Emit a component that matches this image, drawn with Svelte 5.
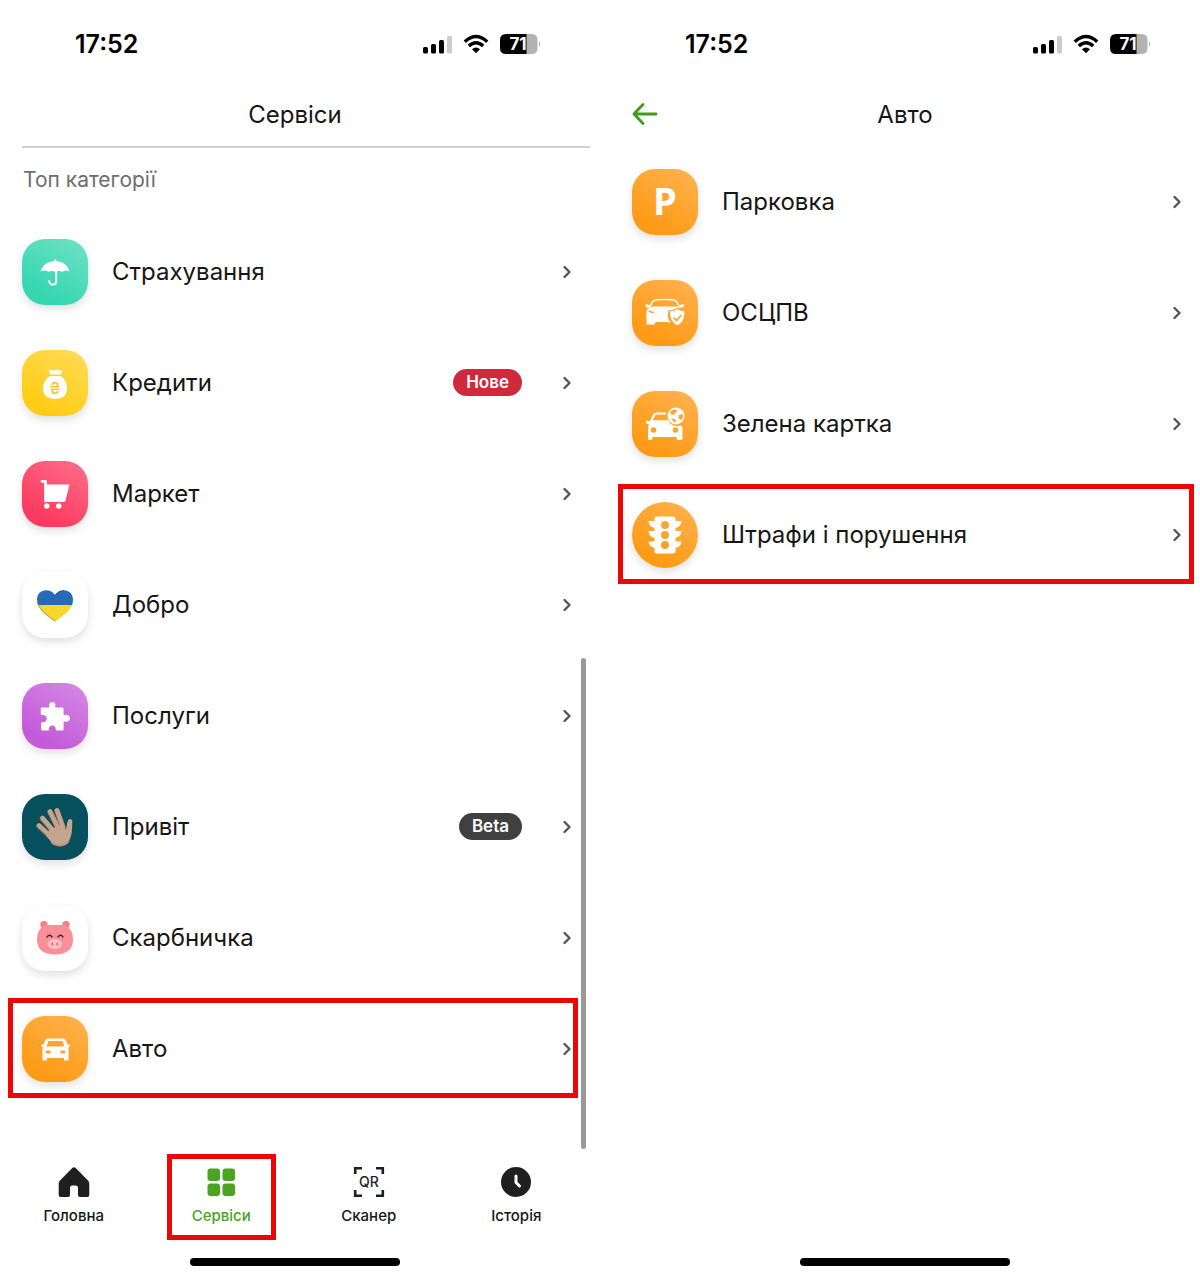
<script>
  const services = [
    { id: "insurance", name: "Страхування", color: "mint" },
    { id: "credit", name: "Кредити", color: "yellow", badge: "Нове", badgeType: "new" },
    { id: "market", name: "Маркет", color: "pink" },
    { id: "charity", name: "Добро", color: "white" },
    { id: "puzzle", name: "Послуги", color: "purple" },
    { id: "hello", name: "Привіт", color: "teal", badge: "Beta", badgeType: "beta" },
    { id: "piggy", name: "Скарбничка", color: "white" },
    { id: "auto", name: "Авто", color: "orange", marked: true },
  ];

  const autoServices = [
    { id: "parking", name: "Парковка", color: "orange" },
    { id: "policy", name: "ОСЦПВ", color: "orange" },
    { id: "greencard", name: "Зелена картка", color: "orange" },
    { id: "fines", name: "Штрафи і порушення", color: "orange", round: true, marked: true },
  ];

  const tabs = [
    { id: "home", name: "Головна" },
    { id: "services", name: "Сервіси", active: true },
    { id: "scanner", name: "Сканер" },
    { id: "history", name: "Історія" },
  ];
</script>

{#snippet statusBar()}
  <div class="status">
    <span class="time">17:52</span>
    <svg class="indicators" width="120" height="24" viewBox="0 0 120 24" aria-hidden="true">
      <rect x="1" y="15" width="5" height="6.500" rx="1.500" />
      <rect x="9" y="12" width="5" height="9.500" rx="1.500" />
      <rect x="17" y="8" width="5" height="13.500" rx="1.500" />
      <rect x="25" y="4" width="5" height="17.500" rx="1.500" fill="#ccc" />
      <g fill="none" stroke="#000" stroke-width="3.400">
        <path d="M42.800 9.700Q54 -.7 65.200 9.700" />
        <path d="M46.800 14Q54 7.500 61.200 14" />
      </g>
      <path d="M54 21.300l-4-4.100q4-3.200 8 0z" />
      <path d="M84 2h21v20H84q-6 0-6-6V8q0-6 6-6z" />
      <path d="M104.500 2h5q6 0 6 6v8q0 6-6 6h-5z" fill="#b3b3b3" />
      <path d="M117 9q2.500 3 0 6z" fill="#b3b3b3" />
      <text x="96" y="18" text-anchor="middle" font-size="17" font-weight="700" fill="#fff">71</text>
    </svg>
  </div>
{/snippet}

{#snippet picture(id)}
  <svg width="66" height="66" viewBox="0 0 66 66" fill="#fff" aria-hidden="true">
    {#if id === "insurance"}
      <path d="M18.500 32.500C20 26 26 22.500 32.300 22.300V20.500q1-1.500 2 0v1.800C40.500 22.500 46 26 47.500 32.500Q43.500 30.500 40.500 32.800Q37 31 33.500 32.800Q29.500 31 26.500 32.800Q22.500 30.500 18.500 32.500z" />
      <path d="M34.200 31V42.500Q34.200 45.600 30.800 45.600T27.200 42" fill="none" stroke="#fff" stroke-width="1.900" stroke-linecap="round" />
    {:else if id === "credit"}
      <path d="M27 20q1.500-1 3 0t3.200 0t3.200 0t3 0q1 .5.500 1.500l-1 3H28.500l-1.500-3z" />
      <path d="M28 26H38.500C43 29 45 33.500 45 38.500C45 45.500 40 49 33 49S21 45.500 21 38.500C21 33.500 23.500 29 28 26z" />
      <text x="33" y="43.500" text-anchor="middle" font-size="16" font-weight="500" fill="#f6c81f">₴</text>
    {:else if id === "market"}
      <path d="M20 20.300H23.500V40" fill="none" stroke="#fff" stroke-width="2.800" stroke-linecap="round" stroke-linejoin="round" />
      <path d="M23 23.500H47.500L43.500 39.500Q43.200 41 42 41H23z" />
      <circle cx="24.800" cy="45" r="2.700" />
      <circle cx="36.800" cy="45" r="2.700" />
    {:else if id === "charity"}
      <clipPath id="heart">
        <path d="M33 49.500C25 44 15 37.500 15 28C15 22 19 18.300 24 18.300C28 18.300 31 20 33 23C35 20 38 18.300 42 18.300C47 18.300 51 22 51 28C51 37.500 41 44 33 49.500z" />
      </clipPath>
      <g clip-path="url(#heart)">
        <rect x="14" y="17" width="38" height="16.500" fill="#286ab7" />
        <rect x="14" y="33" width="38" height="18" fill="#f4d82e" />
        <path d="M15 28C15 37.500 25 44 33 49.500" fill="none" stroke="#a18a36" stroke-width="2" opacity=".6" />
        <path d="M33 23C35 20 38 18.300 42 18.300" fill="none" stroke="#1d5192" stroke-width="2" opacity=".6" />
      </g>
    {:else if id === "puzzle"}
      <path d="M19.500 24.500H27q.7 0 .4-1.200C26.500 21 28 19 30.300 19S34 21 33.200 23.300q-.4 1.200.4 1.200h6.500q1.500 0 1.500 1.500v5.500q0 1 1.200.5C45.500 31 48 32.700 48 35.300S45.500 39.500 42.800 38.600q-1.200-.4-1.200.6V46q0 1.500-1.500 1.500h-5.600q-.8 0-.8-1C33.700 44 32.500 42.500 30.300 42.500S27 44 27 46.500q0 1-.8 1h-5.700Q19 47.500 19 46v-6q0-1 1-.8C23 39.500 24.800 38 24.800 35.500S23 31.700 20 32q-1.200.1-1.200-.8V25z" />
    {:else if id === "hello"}
      <g fill="none" stroke="#8a705f" stroke-width="5.600" stroke-linecap="round">
        <path d="M17 32l12 11M20.500 24.500l11 13M28 18l8 16M35 16.800l6 17" />
      </g>
      <path d="M27 36L41 30L44 36C44.500 33 45 29 46 26.500C47 24 50.500 24.500 50.300 27.500C50 34 50.500 41 47 47C43 53 34.500 53 29.500 48.500L24 41.500z" fill="#c5a58f" />
      <g fill="none" stroke="#c5a58f" stroke-width="4.300" stroke-linecap="round">
        <path d="M17 31.500l12 11M20.500 24l11 13M28 17.500l8 16M35 16.200l6 17" />
      </g>
      <path d="M29 48.500C34.500 53 43 53 47 47" fill="none" stroke="#b09079" stroke-width="1.500" />
    {:else if id === "piggy"}
      <g fill="#f47f87">
        <circle cx="22" cy="19.700" r="3.700" />
        <circle cx="44" cy="19.700" r="3.700" />
      </g>
      <path d="M23 20H43Q51 24 51 34.500C51 44 45 49.500 33 49.500S15 44 15 34.500Q15 24 23 20z" fill="#fb8e96" />
      <path d="M25 32q2.500-3.400 5 0M36 32q2.500-3.400 5 0" fill="none" stroke="#45272c" stroke-width="1.400" stroke-linecap="round" />
      <ellipse cx="32.800" cy="39" rx="7.300" ry="5" fill="#ffc0c3" />
      <ellipse cx="30.300" cy="39" rx="1.100" ry="1.700" fill="#f06b77" />
      <ellipse cx="35.300" cy="39" rx="1.100" ry="1.700" fill="#f06b77" />
    {:else if id === "auto"}
      <path fill-rule="evenodd" d="M26 22.500H41Q43 22.500 43.800 24.500L45.500 28.500H47.500V30.500L46 31.500Q46.500 32.500 46.500 34V44.500H42V42H25V44.500H20.500V34Q20.500 32.500 21 31.500L19.500 30.500V28.500H21.500L23.200 24.500Q24 22.500 26 22.500zM26.500 25L24.500 30.500H42.500L40.500 25zM25 34.500q-1.500.2-1.500 1.500t1.500 1.500h3.500v-3zM42 34.500h-3.500v3H42q1.500-.2 1.500-1.500t-1.500-1.500z" />
    {:else if id === "parking"}
      <text x="33" y="46" text-anchor="middle" font-family="Open Sans, sans-serif" font-size="38" font-weight="700">P</text>
    {:else if id === "policy"}
      <path d="M18 27L20 22.500Q21.500 20 25 19.800Q32 19 40 19.800Q43.500 20 45.200 22.500L47.500 27" fill="none" stroke="#fff" stroke-width="1.500" />
      <path d="M13.500 24.500q3-1 4.500 1.500v1.500h-4zM52 24.500q-3-1-4.500 1.500v1.500h4z" />
      <path d="M18 27.500L21.500 26.500H44.500L48 28L45 28.500Q41 30.500 36.500 30.500C35 36 36.500 40.500 39 43L35 42H23.500L22.500 44.500H14.500V31Q15 28.500 18 27.500z" />
      <path d="M16 30.500q1.500 3 6.500 2.800q-1-2.300-6.500-2.800z" fill="#ffa636" />
      <path d="M45.500 28.500q3.500 2.300 7.500 2.500C53.500 38.500 51 43.500 45.500 46C40 43.500 37 38.500 37.500 31q4.500-.2 8-2.500z" stroke="#ffa42c" stroke-width="1.200" />
      <path d="M41.500 37.500l3 3l5-5.500" fill="none" stroke="#ffa428" stroke-width="1.700" />
    {:else if id === "greencard"}
      <path d="M19 30.500L21.500 25Q22.500 22.500 26 22.500H34" fill="none" stroke="#fff" stroke-width="2.200" />
      <path fill-rule="evenodd" d="M14 30h4.500l1-.8H36q3 6 9.500 5.800l3.500-.6Q50.500 35.500 50.500 37.500V48Q50 49 48.500 49H45.500Q44.500 48.800 44.500 46H20.500Q20.500 48.800 19.500 49H17.500Q16.500 49 16 47.500V37Q16 35.500 17 33.500L14 32.500zM21.500 36.200a2.800 2.800 0 1 0 0 5.600a2.800 2.800 0 0 0 0-5.600zM43.500 36.200a2.800 2.800 0 1 0 0 5.600a2.800 2.800 0 0 0 0-5.600z" />
      <circle cx="44" cy="25" r="8.500" />
      <path d="M40 19q2.500-1.200 5 .2l-.5 2.300l-2 .5l.5 2l-3.500-.5l-1.500-2zM46.500 24.500l4-2q1 3 0 5.500l-2 1l-2-2zM39 27.500l4 .5l1.500 2.500l-1.500 1q-2.500-1.500-4-4z" fill="#ffa636" />
    {:else if id === "fines"}
      <path fill-rule="evenodd" d="M25 14.500H41Q43.500 14.500 43.500 17V19H49.500Q49 24.500 43.500 26V29H49.500Q49 34.500 43.500 36V39.500H49.500Q49 44.500 43.500 46V49Q43.500 51.500 41 51.500H25Q22.500 51.500 22.500 49V46Q17 44.500 16.500 39.500H22.500V36Q17 34.500 16.500 29H22.500V26Q17 24.500 16.500 19H22.500V17Q22.500 14.500 25 14.500zM33 19a4 4 0 1 0 0 8a4 4 0 0 0 0-8zM33 29a4 4 0 1 0 0 8a4 4 0 0 0 0-8zM33 39a4 4 0 1 0 0 8a4 4 0 0 0 0-8z" />
    {/if}
  </svg>
{/snippet}

{#snippet list(items)}
  <ul class="list">
    {#each items as item (item.id)}
      <li class:marked={item.marked}>
        <a class="row" href="#{item.id}">
          <span class="tile {item.color}" class:round={item.round}>{@render picture(item.id)}</span>
          <span class="name">{item.name}</span>
          {#if item.badge}
            <span class="badge {item.badgeType}">{item.badge}</span>
          {/if}
          <svg class="chevron" width="10" height="14" viewBox="0 0 10 14" aria-hidden="true">
            <path d="M2.500 2l5 5l-5 5" />
          </svg>
        </a>
      </li>
    {/each}
  </ul>
{/snippet}

<main class="screens">
  <section class="screen services">
    {@render statusBar()}
    <header class="bar lined">
      <h1>Сервіси</h1>
    </header>
    <h2>Топ категорії</h2>
    {@render list(services)}
    <div class="scrollbar"></div>
    <nav class="tabs">
      {#each tabs as tab (tab.id)}
        <a href="#{tab.id}" class="tab" class:active={tab.active}>
          <svg width="36" height="36" viewBox="0 0 36 36" fill="#1f1f1f" aria-hidden="true">
            {#if tab.id === "home"}
              <path d="M16.500 3.800Q18 2.500 19.500 3.800L32 16.500Q33.300 17.800 33.300 19.500V31Q33.300 33 31.300 33H24Q22 33 22 31V24Q22 21.500 20 21.500H16Q14 21.500 14 24V31Q14 33 12 33H4.700Q2.700 33 2.700 31V19.500Q2.700 17.800 4 16.500z" />
            {:else if tab.id === "services"}
              <g fill="#4aa421">
                <rect x="4.500" y="4.500" width="12.500" height="12.500" rx="3" />
                <rect x="19.500" y="4.500" width="12.500" height="12.500" rx="3" />
                <rect x="4.500" y="19.500" width="12.500" height="12.500" rx="3" />
                <rect x="19.500" y="19.500" width="12.500" height="12.500" rx="3" />
              </g>
            {:else if tab.id === "scanner"}
              <path d="M4.200 10V4.200H11M25 4.200H31.800V10M31.800 26V31.800H25M11 31.800H4.200V26" fill="none" stroke="#1f1f1f" stroke-width="2.600" />
              <text x="18" y="23" text-anchor="middle" font-size="14" font-weight="500">QR</text>
            {:else}
              <circle cx="18" cy="18" r="15" />
              <path d="M18 12V18.500L21.500 22" fill="none" stroke="#fff" stroke-width="3" stroke-linecap="round" />
            {/if}
          </svg>
          <span>{tab.name}</span>
        </a>
      {/each}
    </nav>
    <div class="home-line"></div>
  </section>

  <section class="screen">
    {@render statusBar()}
    <header class="bar">
      <button class="back" aria-label="Назад">
        <svg width="26" height="24" viewBox="0 0 26 24" aria-hidden="true">
          <path d="M24 12H2M11 2.500L2 12l9 9.500" />
        </svg>
      </button>
      <h1>Авто</h1>
    </header>
    {@render list(autoServices)}
    <div class="home-line"></div>
  </section>
</main>

<style>
  :global(body) {
    background-color: #fff;
    color: #161616;
    font-family: Inter, "Liberation Sans", sans-serif;
  }

  .screens {
    display: grid;
    grid-template-columns: 1fr 1fr;
    gap: 20px;
    min-height: 100vh;
  }

  .screen {
    position: relative;
    display: flex;
    flex-direction: column;
    padding-bottom: 12px;
  }

  .status {
    display: flex;
    align-items: center;
    justify-content: space-between;
    height: 88px;
    padding: 0 48px 0 75px;
    color: #000;
  }

  .time {
    font-size: 25px;
    font-weight: 600;
  }

  .bar {
    position: relative;
    display: flex;
    align-items: center;
    justify-content: center;
    height: 52px;
    padding-bottom: 6px;
  }
  .lined {
    margin-left: 22px;
    padding-right: 22px;
    border-bottom: 2px solid #d0d0d0;
  }

  h1 {
    margin: 0;
    font-size: 24px;
    font-weight: 400;
  }

  h2 {
    margin: 0;
    padding: 0 23px;
    height: 68px;
    line-height: 64px;
    font-size: 21px;
    font-weight: 400;
    color: #6e6e6e;
  }

  .back {
    position: absolute;
    left: 22px;
    top: 14px;
    display: flex;
    padding: 0;
    border: none;
    background: none;
  }
  .back path {
    fill: none;
    stroke: #43991d;
    stroke-width: 2.8;
    stroke-linecap: round;
    stroke-linejoin: round;
  }

  .list {
    margin: 0;
    padding: 0;
    list-style: none;
  }
  .list li {
    position: relative;
  }

  .row {
    display: flex;
    align-items: center;
    height: 111px;
    padding: 0 18px 0 22px;
    color: inherit;
    text-decoration: none;
  }

  /* red frame around the item to tap */
  .marked::after {
    content: "";
    position: absolute;
    inset: 5px 6px 6px 8px;
    border: 5px solid #ec0606;
    pointer-events: none;
  }
  .services .marked::after {
    right: 12px;
  }

  .tile {
    width: 66px;
    height: 66px;
    flex-shrink: 0;
    border-radius: 23px;
    box-shadow: 0 4px 8px rgba(0, 0, 0, 0.12);
  }
  .tile svg {
    display: block;
  }
  .round {
    border-radius: 50%;
  }
  .mint { background: linear-gradient(210deg, #6fe3c6, #35d6b0 80%); }
  .yellow { background: linear-gradient(210deg, #ffdc5a, #fdcd15 80%); }
  .pink { background: linear-gradient(210deg, #ff6f8b, #fd3a60 80%); }
  .purple { background: linear-gradient(210deg, #d68ae4, #c35ada 80%); }
  .orange { background: linear-gradient(210deg, #ffb351, #fd9b16 80%); }
  .teal { background: #05505c; }
  .white { background: #fff; }

  .name {
    flex: 1;
    padding-left: 24px;
    font-size: 24px;
    line-height: 30px;
  }

  .badge {
    margin-right: 40px;
    padding: 0 13px;
    border-radius: 14px;
    font-size: 17px;
    font-weight: 600;
    line-height: 27px;
    color: #fff;
  }
  .new {
    background-color: #cf2a3b;
  }
  .beta {
    background-color: #404040;
  }

  .chevron path {
    fill: none;
    stroke: #555;
    stroke-width: 2.4;
    stroke-linecap: round;
    stroke-linejoin: round;
  }

  .scrollbar {
    position: absolute;
    right: 4px;
    bottom: 129px;
    width: 5px;
    height: 491px;
    border-radius: 3px;
    background-color: #999;
  }

  .tabs {
    display: grid;
    grid-template-columns: repeat(4, 1fr);
    margin-top: auto;
    margin-bottom: 18px;
  }

  .tab {
    position: relative;
    display: flex;
    flex-direction: column;
    align-items: center;
    gap: 5px;
    padding: 10px 0 13px;
    font-size: 15px;
    font-weight: 500;
    line-height: 22px;
    color: #161616;
    text-decoration: none;
  }
  .active {
    color: #4aa421;
  }
  .active::after {
    content: "";
    position: absolute;
    inset: 0 19px;
    border: 5px solid #ec0606;
  }

  .home-line {
    width: 210px;
    height: 8px;
    margin: auto auto 0;
    border-radius: 4px;
    background-color: #000;
  }
  .services .home-line {
    margin-top: 0;
  }
</style>
